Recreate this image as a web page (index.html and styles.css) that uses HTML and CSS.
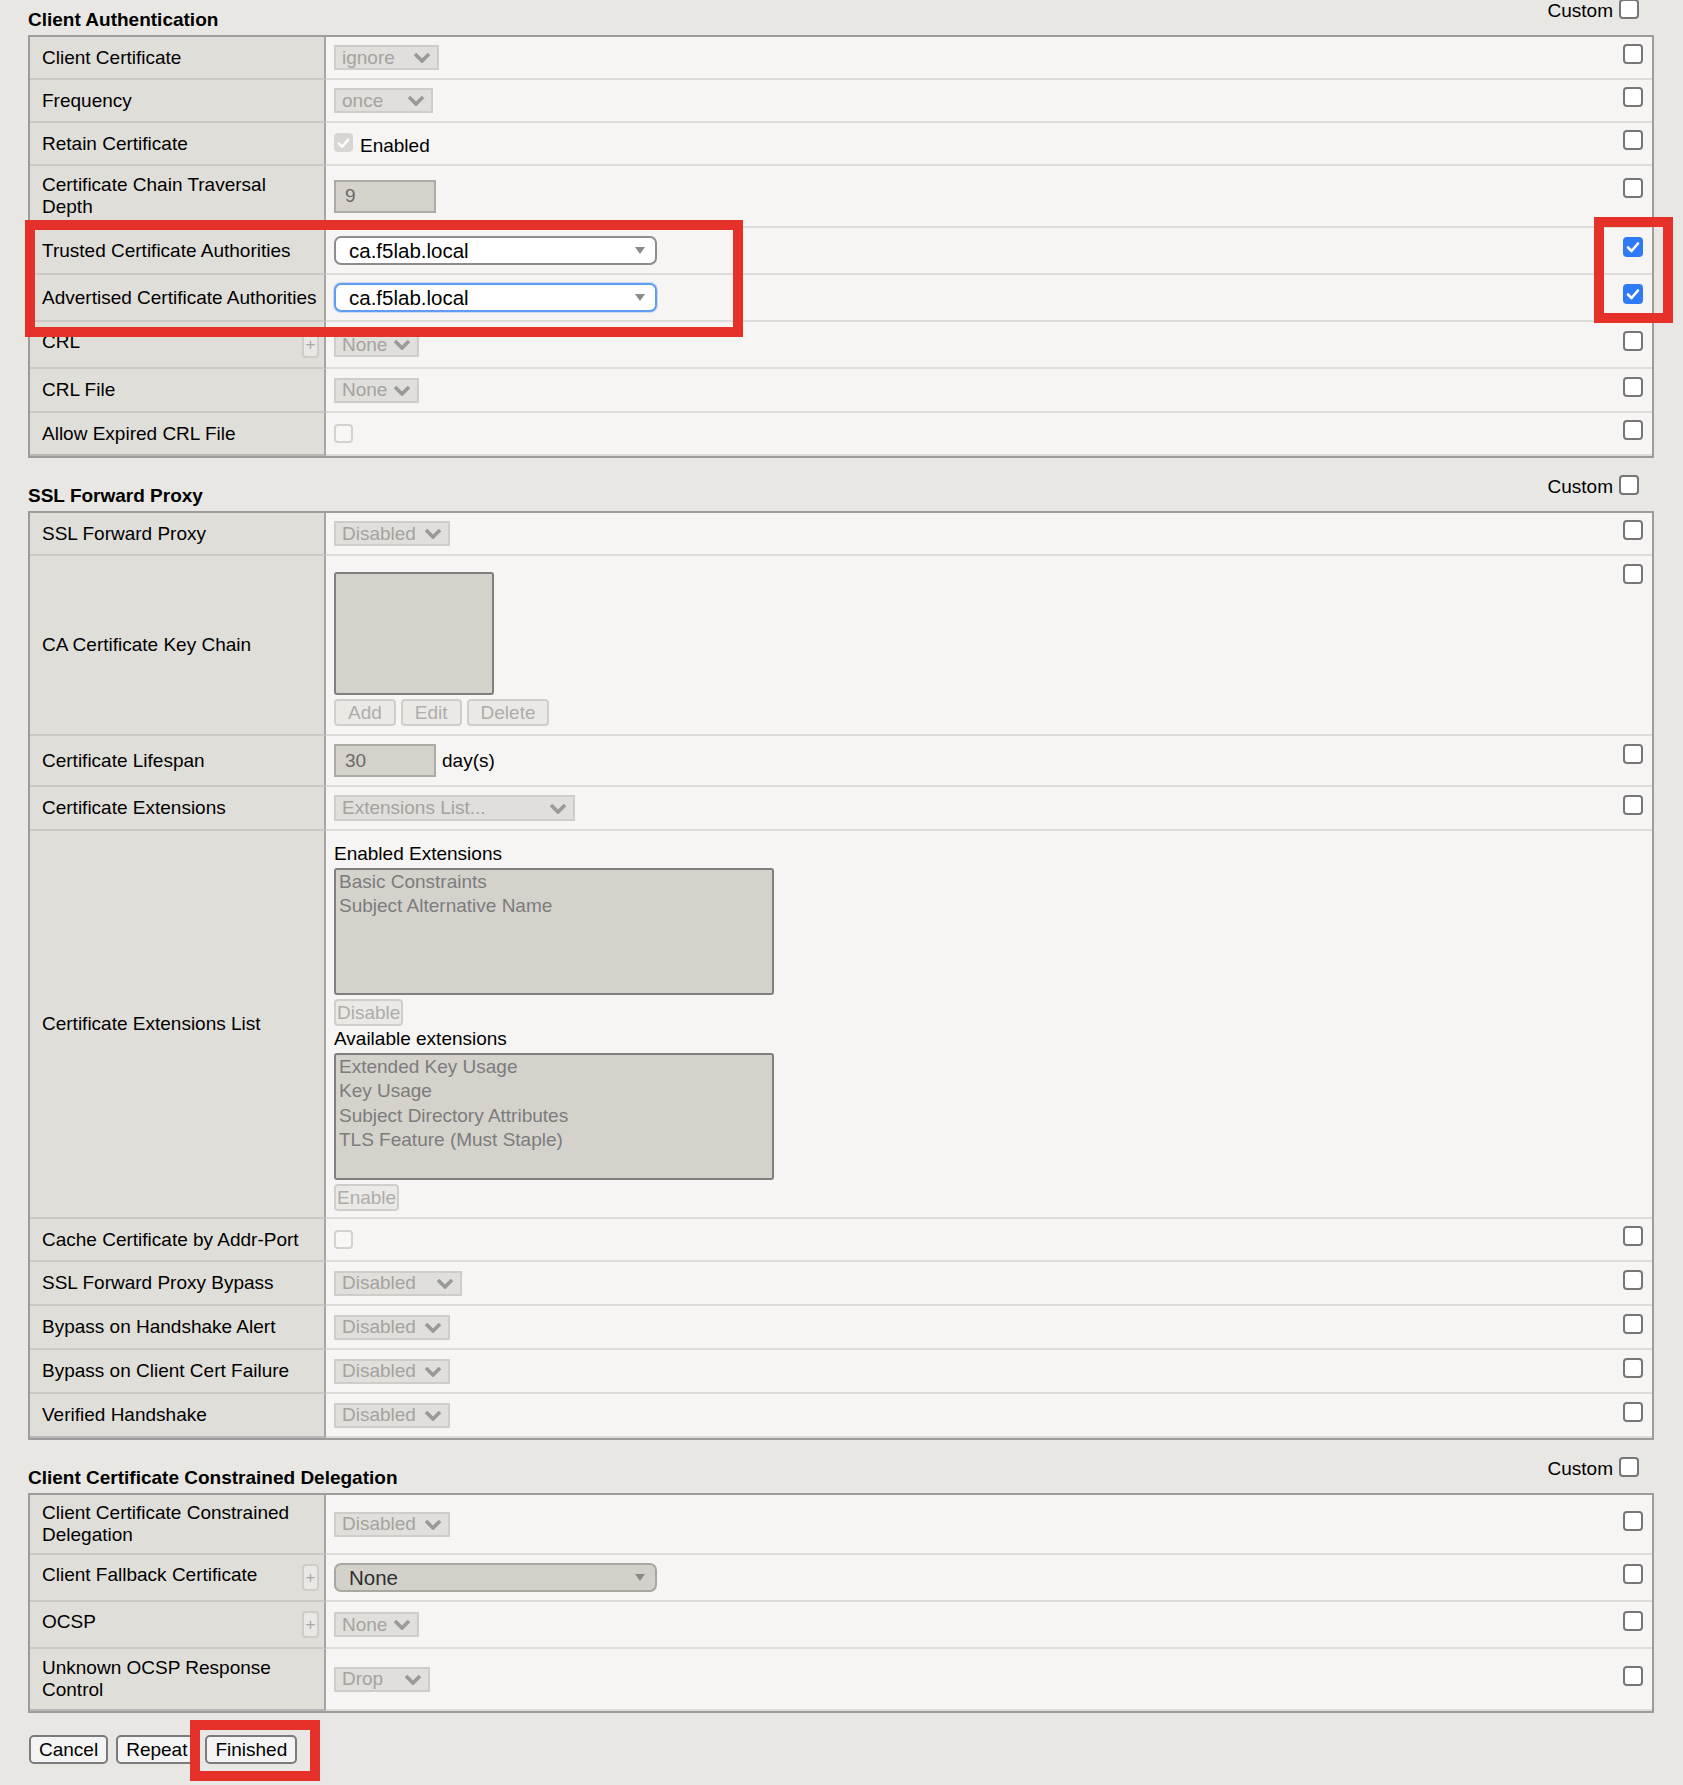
FILE: index.html
```html
<!DOCTYPE html>
<html lang="en">
<head>
<meta charset="utf-8">
<title>Client SSL Profile</title>
<link rel="stylesheet" href="styles.css">
</head>
<body>
<div class="page">

  <section class="sec">
    <div class="sec-head">
      <h2 class="sec-title">Client Authentication</h2>
      <label class="custom">Custom <span class="cb"></span></label>
    </div>
    <div class="tbl">
      <div class="row">
        <div class="lbl"><span>Client Certificate</span></div>
        <div class="val"><span class="sel w105">ignore<svg class="chev" viewBox="0 0 18 11"><path d="M2 2l7 7 7-7"/></svg></span></div>
        <div class="chk"><span class="cb"></span></div>
      </div>
      <div class="row">
        <div class="lbl"><span>Frequency</span></div>
        <div class="val"><span class="sel w99">once<svg class="chev" viewBox="0 0 18 11"><path d="M2 2l7 7 7-7"/></svg></span></div>
        <div class="chk"><span class="cb"></span></div>
      </div>
      <div class="row">
        <div class="lbl"><span>Retain Certificate</span></div>
        <div class="val"><span class="cb-dis on"><svg viewBox="0 0 20 20"><path d="M5 10.5l3.5 3.5L15 6.5"/></svg></span><span class="after-cb">Enabled</span></div>
        <div class="chk"><span class="cb"></span></div>
      </div>
      <div class="row">
        <div class="lbl"><span>Certificate Chain Traversal<br>Depth</span></div>
        <div class="val"><span class="inp">9</span></div>
        <div class="chk top12"><span class="cb"></span></div>
      </div>
      <div class="row">
        <div class="lbl"><span>Trusted Certificate Authorities</span></div>
        <div class="val"><span class="sel2">ca.f5lab.local<svg class="tri" viewBox="0 0 10 7"><path d="M0 0h10L5 7z"/></svg></span></div>
        <div class="chk"><span class="cb on"><svg viewBox="0 0 20 20"><path d="M5 10.5l3.5 3.5L15 6.5"/></svg></span></div>
      </div>
      <div class="row">
        <div class="lbl"><span>Advertised Certificate Authorities</span></div>
        <div class="val"><span class="sel2 focus">ca.f5lab.local<svg class="tri" viewBox="0 0 10 7"><path d="M0 0h10L5 7z"/></svg></span></div>
        <div class="chk"><span class="cb on"><svg viewBox="0 0 20 20"><path d="M5 10.5l3.5 3.5L15 6.5"/></svg></span></div>
      </div>
      <div class="row">
        <div class="lbl has-plus"><span>CRL</span><span class="plus">+</span></div>
        <div class="val"><span class="sel w85">None<svg class="chev" viewBox="0 0 18 11"><path d="M2 2l7 7 7-7"/></svg></span></div>
        <div class="chk"><span class="cb"></span></div>
      </div>
      <div class="row r44">
        <div class="lbl"><span>CRL File</span></div>
        <div class="val"><span class="sel w85">None<svg class="chev" viewBox="0 0 18 11"><path d="M2 2l7 7 7-7"/></svg></span></div>
        <div class="chk"><span class="cb"></span></div>
      </div>
      <div class="row">
        <div class="lbl"><span>Allow Expired CRL File</span></div>
        <div class="val"><span class="cb-dis"></span></div>
        <div class="chk"><span class="cb"></span></div>
      </div>
    </div>
  </section>

  <section class="sec">
    <div class="sec-head">
      <h2 class="sec-title">SSL Forward Proxy</h2>
      <label class="custom">Custom <span class="cb"></span></label>
    </div>
    <div class="tbl">
      <div class="row">
        <div class="lbl"><span>SSL Forward Proxy</span></div>
        <div class="val"><span class="sel w116">Disabled<svg class="chev" viewBox="0 0 18 11"><path d="M2 2l7 7 7-7"/></svg></span></div>
        <div class="chk"><span class="cb"></span></div>
      </div>
      <div class="row">
        <div class="lbl"><span>CA Certificate Key Chain</span></div>
        <div class="val stack keychain">
          <div class="lbox"></div>
          <div class="btns"><span class="dbtn">Add</span><span class="dbtn">Edit</span><span class="dbtn">Delete</span></div>
        </div>
        <div class="chk top8"><span class="cb"></span></div>
      </div>
      <div class="row">
        <div class="lbl"><span>Certificate Lifespan</span></div>
        <div class="val"><span class="inp">30</span><span class="unit">day(s)</span></div>
        <div class="chk top8"><span class="cb"></span></div>
      </div>
      <div class="row">
        <div class="lbl"><span>Certificate Extensions</span></div>
        <div class="val"><span class="sel w241 h26">Extensions List...<svg class="chev" viewBox="0 0 18 11"><path d="M2 2l7 7 7-7"/></svg></span></div>
        <div class="chk"><span class="cb"></span></div>
      </div>
      <div class="row">
        <div class="lbl"><span>Certificate Extensions List</span></div>
        <div class="val stack extlist">
          <div class="cap">Enabled Extensions</div>
          <div class="obox">
            <div class="opt">Basic Constraints</div>
            <div class="opt">Subject Alternative Name</div>
          </div>
          <span class="dbtn tight">Disable</span>
          <div class="cap cap2">Available extensions</div>
          <div class="obox">
            <div class="opt">Extended Key Usage</div>
            <div class="opt">Key Usage</div>
            <div class="opt">Subject Directory Attributes</div>
            <div class="opt">TLS Feature (Must Staple)</div>
          </div>
          <span class="dbtn tight">Enable</span>
        </div>
        <div class="chk"></div>
      </div>
      <div class="row">
        <div class="lbl"><span>Cache Certificate by Addr-Port</span></div>
        <div class="val"><span class="cb-dis"></span></div>
        <div class="chk"><span class="cb"></span></div>
      </div>
      <div class="row r44">
        <div class="lbl"><span>SSL Forward Proxy Bypass</span></div>
        <div class="val"><span class="sel w128">Disabled<svg class="chev" viewBox="0 0 18 11"><path d="M2 2l7 7 7-7"/></svg></span></div>
        <div class="chk"><span class="cb"></span></div>
      </div>
      <div class="row r44">
        <div class="lbl"><span>Bypass on Handshake Alert</span></div>
        <div class="val"><span class="sel w116">Disabled<svg class="chev" viewBox="0 0 18 11"><path d="M2 2l7 7 7-7"/></svg></span></div>
        <div class="chk"><span class="cb"></span></div>
      </div>
      <div class="row r44">
        <div class="lbl"><span>Bypass on Client Cert Failure</span></div>
        <div class="val"><span class="sel w116">Disabled<svg class="chev" viewBox="0 0 18 11"><path d="M2 2l7 7 7-7"/></svg></span></div>
        <div class="chk"><span class="cb"></span></div>
      </div>
      <div class="row r44">
        <div class="lbl"><span>Verified Handshake</span></div>
        <div class="val"><span class="sel w116">Disabled<svg class="chev" viewBox="0 0 18 11"><path d="M2 2l7 7 7-7"/></svg></span></div>
        <div class="chk"><span class="cb"></span></div>
      </div>
    </div>
  </section>

  <section class="sec">
    <div class="sec-head">
      <h2 class="sec-title">Client Certificate Constrained Delegation</h2>
      <label class="custom">Custom <span class="cb"></span></label>
    </div>
    <div class="tbl">
      <div class="row snug">
        <div class="lbl"><span>Client Certificate Constrained<br>Delegation</span></div>
        <div class="val"><span class="sel w116">Disabled<svg class="chev" viewBox="0 0 18 11"><path d="M2 2l7 7 7-7"/></svg></span></div>
        <div class="chk"><span class="cb"></span></div>
      </div>
      <div class="row">
        <div class="lbl has-plus"><span>Client Fallback Certificate</span><span class="plus">+</span></div>
        <div class="val"><span class="sel2 gray">None<svg class="tri" viewBox="0 0 10 7"><path d="M0 0h10L5 7z"/></svg></span></div>
        <div class="chk"><span class="cb"></span></div>
      </div>
      <div class="row">
        <div class="lbl has-plus"><span>OCSP</span><span class="plus">+</span></div>
        <div class="val"><span class="sel w85">None<svg class="chev" viewBox="0 0 18 11"><path d="M2 2l7 7 7-7"/></svg></span></div>
        <div class="chk"><span class="cb"></span></div>
      </div>
      <div class="row">
        <div class="lbl"><span>Unknown OCSP Response<br>Control</span></div>
        <div class="val"><span class="sel w96">Drop<svg class="chev" viewBox="0 0 18 11"><path d="M2 2l7 7 7-7"/></svg></span></div>
        <div class="chk"><span class="cb"></span></div>
      </div>
    </div>
  </section>

  <div class="actions">
    <button class="abtn" type="button">Cancel</button>
    <button class="abtn" type="button">Repeat</button>
    <button class="abtn" type="button">Finished</button>
  </div>
</div>

<div class="anno anno-cas"></div>
<div class="anno anno-checks"></div>
<div class="anno anno-finish"></div>
</body>
</html>
```

FILE: styles.css
```css
* { box-sizing: border-box; }

html, body {
  margin: 0;
  padding: 0;
}

body {
  display: flow-root;
  position: relative;
  height: 1785px;
  overflow: hidden;
  background: #e9e7e3;
  font-family: "Liberation Sans", Arial, Helvetica, sans-serif;
  font-size: 19px;
  line-height: 22px;
  color: #000;
}

.page {
  margin: -18px 29px 0 28px;
}

/* section header */
.sec-head {
  display: flex;
  justify-content: space-between;
  align-items: flex-start;
  height: 53px;
  padding: 17px 15px 0 0;
}

.sec-title {
  margin: 10px 0 0 0;
  font-size: 19px;
  line-height: 22px;
  font-weight: bold;
}

.custom {
  display: flex;
  align-items: center;
  gap: 6px;
}

.custom .cb {
  margin-bottom: 4px;
}

/* table */
.tbl {
  border: 2px solid #9c9c9c;
  background: #f6f5f3;
}

.row {
  display: grid;
  grid-template-columns: 296px 1fr 40px;
  min-height: 43px;
}

.row.r44 { min-height: 44px; }

.lbl {
  display: flex;
  align-items: center;
  justify-content: space-between;
  padding: 8px 5px 8px 12px;
  background: #e0ded9;
  border-right: 2px solid #a7a5a1;
  border-bottom: 2px solid #cbc9c5;
  white-space: nowrap;
}

.row.snug > .lbl,
.row.snug > .val {
  padding-top: 7px;
  padding-bottom: 7px;
}

.lbl.has-plus {
  padding-top: 9px;
  padding-bottom: 9px;
}

.lbl.has-plus > span:first-child {
  margin-bottom: 5px;
}

.val {
  display: flex;
  align-items: center;
  padding: 8px;
  border-bottom: 2px solid #dedcd8;
}

.chk {
  display: flex;
  align-items: center;
  justify-content: flex-end;
  padding-right: 9px;
  border-bottom: 2px solid #dedcd8;
}

.chk .cb {
  margin-bottom: 7px;
}

.chk.top12 { align-items: flex-start; padding-top: 12px; }
.chk.top8 { align-items: flex-start; padding-top: 8px; }
.chk.top12 .cb, .chk.top8 .cb { margin-bottom: 0; }

.row:last-child > .lbl {
  border-bottom-color: #b9b7b3;
}

/* checkboxes */
.cb {
  display: inline-flex;
  align-items: center;
  justify-content: center;
  width: 20px;
  height: 20px;
  border: 2px solid #767676;
  border-radius: 4px;
  background: #fff;
  flex: none;
}

.cb.on {
  border: 0;
  background: #2f7bf5;
}

.cb svg, .cb-dis svg {
  width: 20px;
  height: 20px;
}

.cb svg path, .cb-dis svg path {
  fill: none;
  stroke: #fff;
  stroke-width: 2.6;
  stroke-linecap: round;
  stroke-linejoin: round;
}

.cb-dis {
  display: inline-flex;
  align-items: center;
  justify-content: center;
  width: 19px;
  height: 19px;
  border: 2px solid #d3d1cd;
  border-radius: 4px;
  background: #f8f7f5;
  flex: none;
}

.cb-dis.on {
  border: 0;
  background: #d7d6d3;
  margin-bottom: 2px;
}

.after-cb {
  margin: 3px 0 -1px 7px;
}

/* disabled selects */
.sel {
  display: inline-flex;
  align-items: center;
  justify-content: space-between;
  height: 25px;
  padding: 0 6px;
  border: 2px solid #cfcdc9;
  background: #e1dfdb;
  color: #a4a3a0;
  white-space: nowrap;
}

.sel.h26 { height: 26px; }

.w85 { width: 85px; }
.w96 { width: 96px; }
.w99 { width: 99px; }
.w105 { width: 105px; }
.w116 { width: 116px; }
.w128 { width: 128px; }
.w241 { width: 241px; }

.chev {
  width: 18px;
  height: 11px;
  flex: none;
}

.chev path {
  fill: none;
  stroke: #999;
  stroke-width: 3.6;
}

/* rounded selects */
.sel2 {
  display: inline-flex;
  align-items: center;
  justify-content: space-between;
  width: 323px;
  height: 29px;
  padding: 0 10px 0 13px;
  border: 2px solid #8d8d8d;
  border-radius: 7px;
  background: #fff;
  color: #000;
  font-size: 20.5px;
}

.sel2.focus {
  border-color: #5f9cf2;
  box-shadow: 0 0 0 1px rgba(95, 156, 242, 0.3);
}

.sel2.gray {
  background: #d4d1cb;
  border-color: #a9a7a2;
  color: #2e2e2e;
}

.tri {
  width: 10px;
  height: 7px;
  flex: none;
}

.tri path {
  fill: #8a8a8a;
}

/* plus button in label */
.plus {
  display: inline-flex;
  align-items: center;
  justify-content: center;
  width: 17px;
  height: 27px;
  border: 2px solid #cfcdc9;
  border-radius: 4px;
  background: #e9e8e5;
  color: #a9a8a5;
  font-size: 17px;
}

/* inputs */
.inp {
  display: inline-flex;
  align-items: center;
  width: 102px;
  height: 33px;
  padding: 0 9px;
  border: 2px solid #adaba6;
  background: #d5d2cc;
  color: #6a6a6a;
}

.unit {
  margin-left: 6px;
}

/* stacked value cells */
.val.stack {
  flex-direction: column;
  align-items: flex-start;
}

.val.keychain {
  padding: 16px 8px 8px;
  gap: 4px;
}

.lbox {
  width: 160px;
  height: 123px;
  border: 2px solid #7f7f7f;
  border-radius: 3px;
  background: #d5d2cc;
}

.btns {
  display: flex;
  gap: 5px;
}

.dbtn {
  display: inline-flex;
  align-items: center;
  height: 27px;
  padding: 0 12px;
  border: 2px solid #d0cecb;
  border-radius: 4px;
  background: #eae9e6;
  color: #aeadaa;
}

.dbtn.tight {
  padding: 0 1px;
  margin-top: 4px;
}

.val.extlist {
  padding: 12px 8px 6px;
}

.cap {
  line-height: 22px;
}

.cap2 {
  margin-top: 2px;
}

.obox {
  width: 440px;
  height: 127px;
  margin-top: 3px;
  padding: 0 3px;
  border: 2px solid #7f7f7f;
  border-radius: 3px;
  background: #d5d2cc;
  color: #7c7c7c;
}

.opt {
  line-height: 24.3px;
}

/* action buttons */
.actions {
  display: flex;
  gap: 8px;
  margin: 22px 0 0 1px;
}

.abtn {
  height: 29px;
  padding: 0 8px;
  border: 2px solid #7b7b7b;
  border-radius: 5px;
  background: #f4f4f4;
  color: #000;
  font-family: inherit;
  font-size: 19px;
  line-height: 22px;
}

/* red annotation frames drawn over the screenshot */
.anno {
  position: absolute;
  border: 10px solid #e5312a;
}

.anno-cas {
  left: 25px;
  top: 220px;
  width: 718px;
  height: 117px;
}

.anno-checks {
  left: 1594px;
  top: 217px;
  width: 79px;
  height: 106px;
}

.anno-finish {
  left: 190px;
  top: 1720px;
  width: 130px;
  height: 61px;
}
```
